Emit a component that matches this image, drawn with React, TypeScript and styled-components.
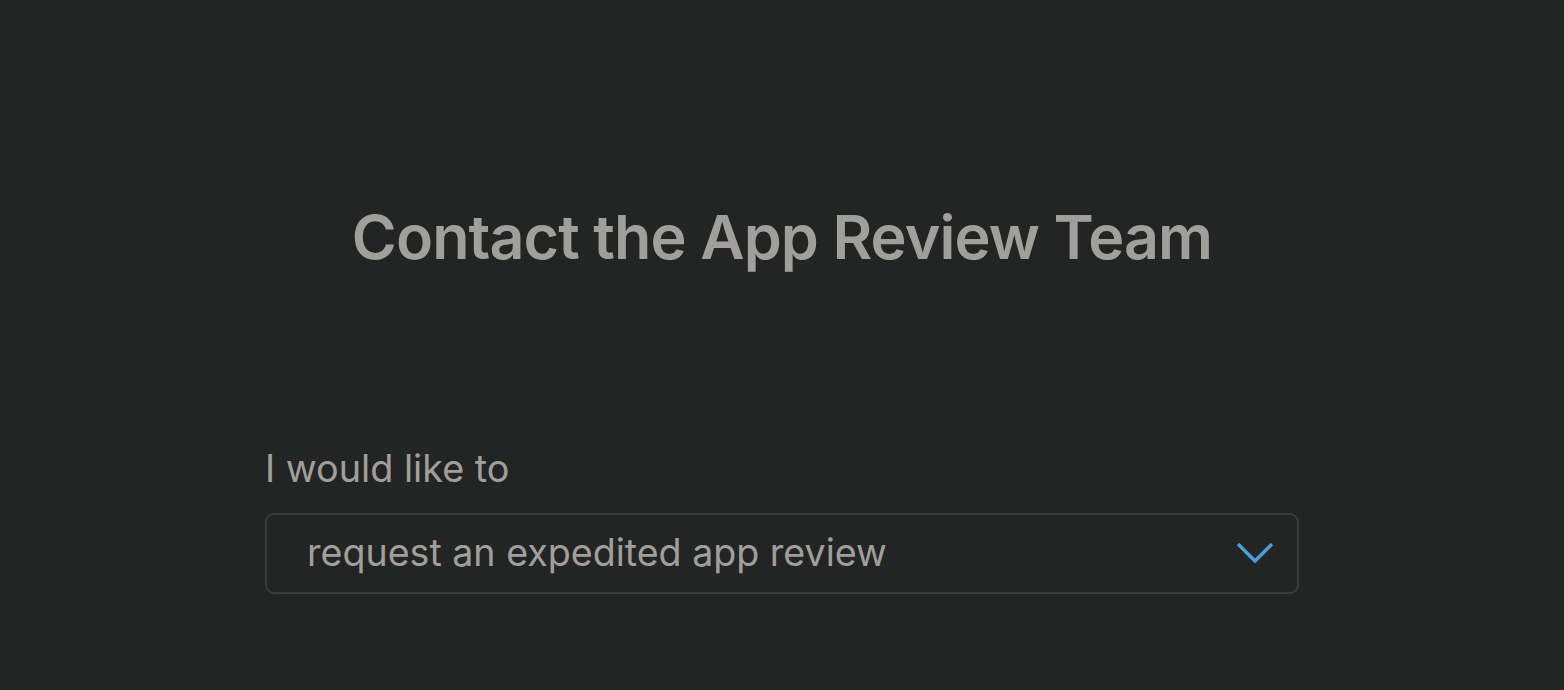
import type { FC, ReactElement } from "react";
import styled, { createGlobalStyle } from "styled-components";

const GlobalStyle = createGlobalStyle`
  html, body {
    margin: 0;
    padding: 0;
    background: #232524;
  }
  body {
    font-family: Inter, "Noto Sans", sans-serif;
    color: #a19f9b;
  }
`;

const Page = styled.main`
  width: 1564px;
  height: 690px;
  box-sizing: border-box;
  padding-top: 197px;
  display: flex;
  flex-direction: column;
  align-items: center;
  overflow: hidden;
`;

const Title = styled.h1`
  margin: 0;
  font-size: 61px;
  font-weight: 600;
  line-height: 80px;
  letter-spacing: -0.9px;
  color: #a19f9b;
`;

const Form = styled.form`
  width: 1034px;
  margin-top: 168px;
  display: flex;
  flex-direction: column;
  gap: 22px;
`;

const Label = styled.label`
  font-size: 37.8px;
  font-weight: 400;
  line-height: 46px;
  color: #a19f9b;
`;

const SelectBox = styled.div`
  height: 81px;
  box-sizing: border-box;
  border: 2px solid #3b3d3d;
  border-radius: 9px;
  padding: 0 22px 2px 40px;
  display: flex;
  align-items: center;
  justify-content: space-between;
`;

const Value = styled.span`
  font-size: 37.6px;
  line-height: 46px;
  color: #a19f9b;
`;

const Chevron: FC = (): ReactElement => (
    <svg width="40" height="24" viewBox="0 0 40 24" fill="none">
        <path d="M3 3 L20 20 L37 3" stroke="#4a9fd8" strokeWidth="3.4" />
    </svg>
);

const App: FC = (): ReactElement => (
    <>
        <GlobalStyle />
        <Page>
            <Title>Contact the App Review Team</Title>
            <Form>
                <Label>I would like to</Label>
                <SelectBox>
                    <Value>request an expedited app review</Value>
                    <Chevron />
                </SelectBox>
            </Form>
        </Page>
    </>
);

export default App;
